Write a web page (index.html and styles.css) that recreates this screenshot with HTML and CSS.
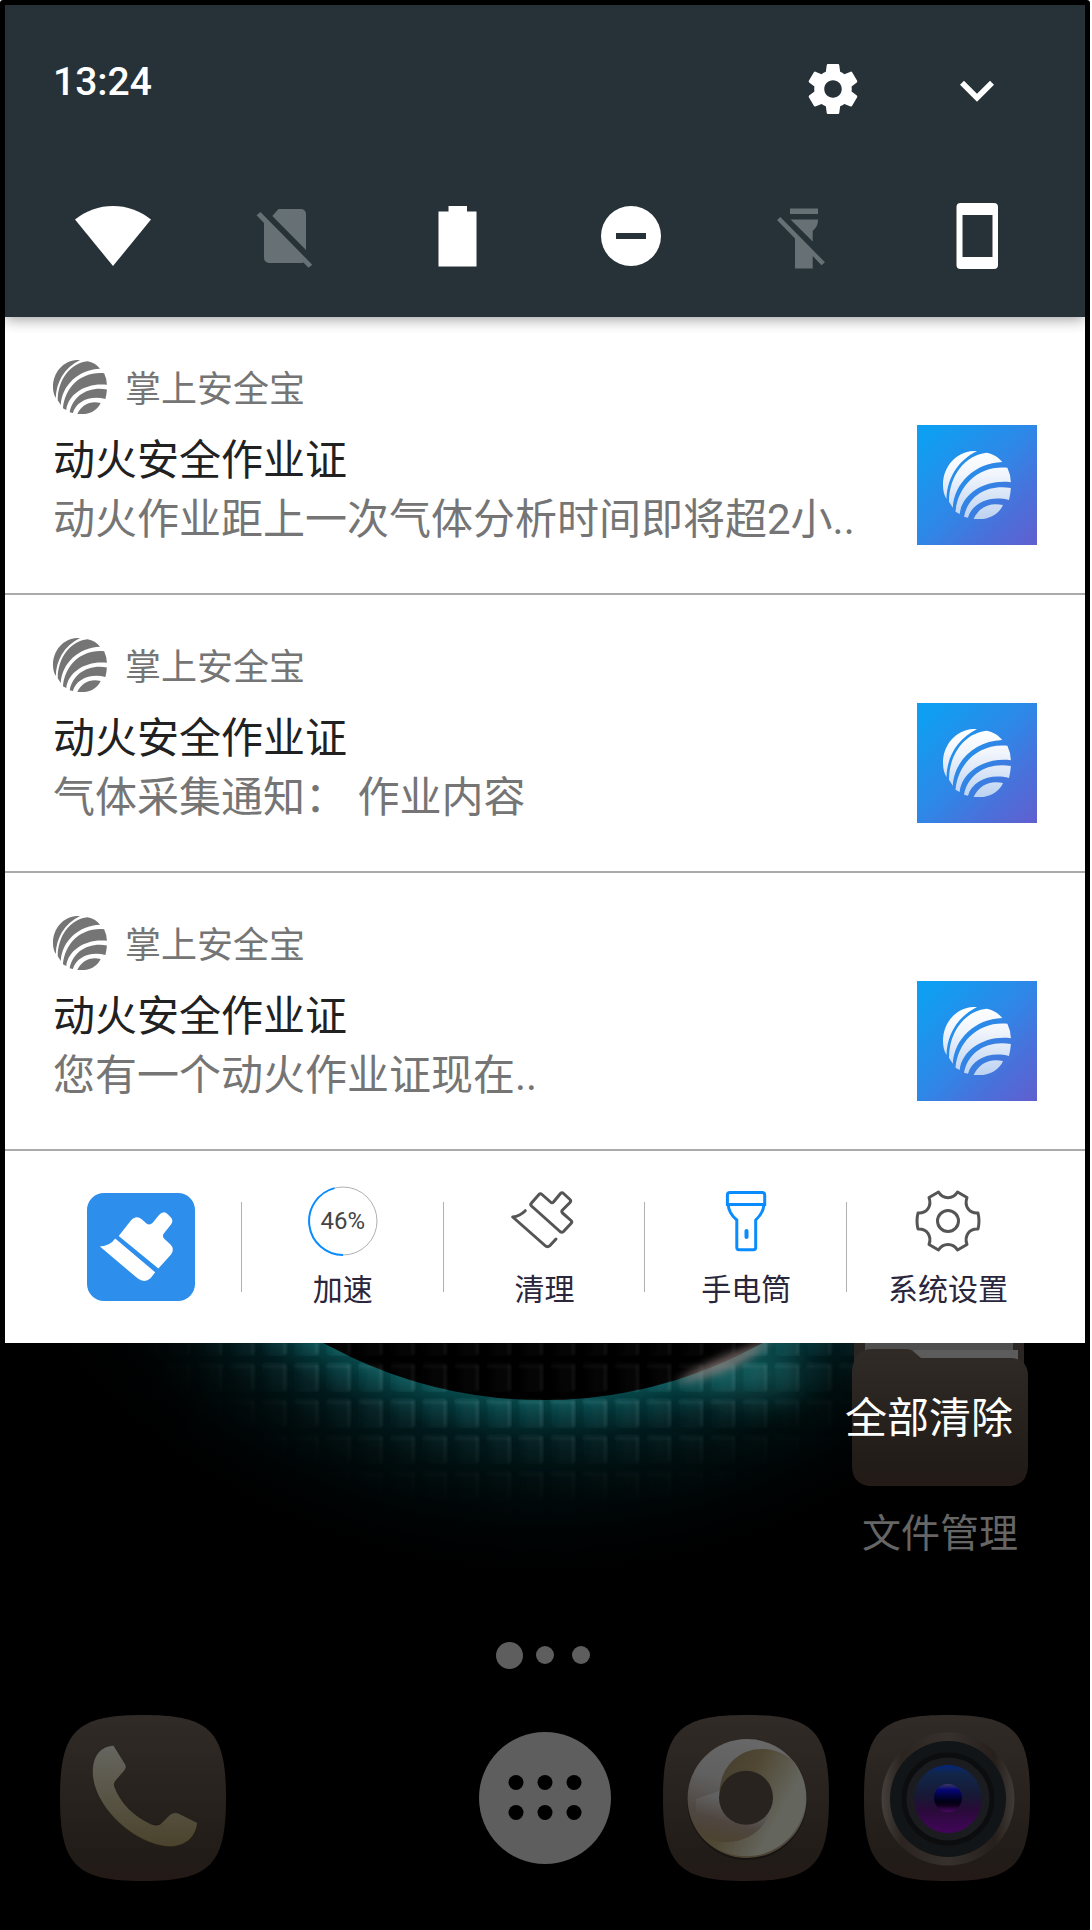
FILE: index.html
```html
<!DOCTYPE html>
<html lang="zh-CN">
<head>
<meta charset="utf-8">
<meta name="viewport" content="width=device-width, initial-scale=1">
<title>通知</title>
<link rel="stylesheet" href="styles.css">
</head>
<body>
<svg class="defs" aria-hidden="true">
  <defs>
    <linearGradient id="ball-shade" gradientUnits="userSpaceOnUse" x1="0" y1="0" x2="0" y2="68">
      <stop offset="0" stop-color="#fff"/><stop offset=".35" stop-color="#f1f5fc"/><stop offset="1" stop-color="#bcd2f1"/>
    </linearGradient>
    <linearGradient id="tile-brown" x1="0" y1="0" x2="0" y2="1">
      <stop offset="0" stop-color="#312b28"/><stop offset=".85" stop-color="#211c18"/><stop offset="1" stop-color="#241a17"/>
    </linearGradient>
    <symbol id="ball" viewBox="0 0 68 68">
      <path d="M34 0C14 -1 0 15 0 34C0 39 1 44 3.500 48C4 28 14 10 34 0Z"/>
      <path d="M43.500 1.700C50 3 55.500 6 59.200 11C32 12 11 32 9.800 56.700L6 50.700C6 25 22 4 43.500 1.700Z"/>
      <path d="M64.400 16.700Q67.500 23 67.900 31.300C43 28 19 42 16.700 63L12.500 60.700C15 34 36 14 64.400 16.700Z"/>
      <path d="M67.900 37Q67.500 43 66 49C47 44 29 52 25 66.700L21 65.700C25 45 44 33 67.900 37Z"/>
      <path d="M60 54C56 64 43 70 30.600 68C36 56 47 51 60 54Z"/>
    </symbol>
  </defs>
</svg>

<main class="screen">
  <div class="shade">
    <header class="quick">
      <div class="status">
        <time class="clock" datetime="13:24">13:24</time>
        <div class="status-actions">
          <button class="icon-button" type="button" aria-label="设置">
            <svg width="60" height="60" viewBox="0 0 24 24" fill="#fff"><path d="M19.430 12.980c.04-.32.07-.64.07-.98s-.03-.66-.07-.98l2.110-1.650c.19-.15.24-.42.12-.64l-2-3.460c-.12-.22-.39-.3-.61-.22l-2.490 1c-.52-.4-1.080-.73-1.690-.98l-.38-2.650C14.460 2.180 14.250 2 14 2h-4c-.25 0-.46.18-.49.42l-.38 2.650c-.61.25-1.170.59-1.690.98l-2.490-1c-.23-.09-.49 0-.61.22l-2 3.460c-.13.22-.07.49.12.64l2.110 1.650c-.04.32-.07.65-.07.98s.03.66.07.98l-2.110 1.650c-.19.15-.24.42-.12.64l2 3.460c.12.22.39.3.61.22l2.490-1c.52.4 1.080.73 1.690.98l.38 2.650c.03.24.24.42.49.42h4c.25 0 .46-.18.49-.42l.38-2.650c.61-.25 1.170-.59 1.690-.98l2.490 1c.23.09.49 0 .61-.22l2-3.460c.12-.22.07-.49-.12-.64l-2.110-1.650zM12 15.500c-1.930 0-3.500-1.570-3.500-3.500s1.570-3.500 3.500-3.500 3.500 1.570 3.500 3.500-1.570 3.500-3.500 3.500z"/></svg>
          </button>
          <button class="icon-button" type="button" aria-label="展开">
            <svg width="68" height="68" viewBox="0 0 24 24" fill="#fff"><path d="M16.590 9.090L12 13.670 7.410 9.090 6 10.500l6 6 6-6z"/></svg>
          </button>
        </div>
      </div>
      <div class="tiles">
        <button class="icon-button" type="button" aria-label="WLAN"><svg width="80" height="80" fill="#fff"><path d="M2 23.500A60 60 0 0 1 78 23.500L40 70Z"/></svg></button>
        <button class="icon-button" type="button" aria-label="无 SIM 卡"><svg width="80" height="80" fill="#677074"><path d="M26.300 20L32.500 13H55a5 5 0 0 1 5 5V54Z"/><path d="M10.600 19.300L14.400 16L66.300 68.700L62.500 71.700L57.500 66.500L56 67H23a5 5 0 0 1-5-5V27Z"/></svg></button>
        <button class="icon-button" type="button" aria-label="电池"><svg width="80" height="80" fill="#fff"><path d="M29.500 10H48V15.500H57.500V70.500H19.500V15.500H29.500Z"/></svg></button>
        <button class="icon-button" type="button" aria-label="勿扰"><svg width="80" height="80"><circle cx="40" cy="40" r="30" fill="#fff"/><path d="M25 37H55V43H25Z" fill="#263238"/></svg></button>
        <button class="icon-button" type="button" aria-label="手电筒已关闭"><svg width="80" height="80" fill="#677074"><path d="M26 12.500H54V18H26Z"/><path d="M26.500 23.500H54C54 29 52 32 48.700 35V45.500Z"/><path d="M13 24L16.300 21L61 66.300L57.500 69.300L48.700 60V72.500H31V42.500Z"/></svg></button>
        <button class="icon-button" type="button" aria-label="屏幕方向"><svg width="80" height="80" fill="#fff" fill-rule="evenodd"><path d="M23.500 7H57a4 4 0 0 1 4 4V69a4 4 0 0 1-4 4H23.500a4 4 0 0 1-4-4V11a4 4 0 0 1 4-4ZM25.500 19V61H55.500V19Z"/></svg></button>
      </div>
    </header>

    <section class="notices">
      <article class="notice">
        <div class="notice-text">
          <div class="app"><svg class="app-mark" width="54" height="54"><use href="#ball"/></svg><span>掌上安全宝</span></div>
          <h2>动火安全作业证</h2>
          <p>动火作业距上一次气体分析时间即将超2小..</p>
        </div>
        <div class="badge"><svg width="68" height="68"><use href="#ball"/></svg></div>
      </article>
      <article class="notice">
        <div class="notice-text">
          <div class="app"><svg class="app-mark" width="54" height="54"><use href="#ball"/></svg><span>掌上安全宝</span></div>
          <h2>动火安全作业证</h2>
          <p>气体采集通知： 作业内容</p>
        </div>
        <div class="badge"><svg width="68" height="68"><use href="#ball"/></svg></div>
      </article>
      <article class="notice">
        <div class="notice-text">
          <div class="app"><svg class="app-mark" width="54" height="54"><use href="#ball"/></svg><span>掌上安全宝</span></div>
          <h2>动火安全作业证</h2>
          <p>您有一个动火作业证现在..</p>
        </div>
        <div class="badge"><svg width="68" height="68"><use href="#ball"/></svg></div>
      </article>
    </section>

    <nav class="tools">
      <button class="tool tool-main" type="button" aria-label="清理大师">
        <svg width="108" height="108"><rect width="108" height="108" rx="17" fill="#2d8eec"/><g fill="#fff"><path d="M31.700 43L43.500 28Q49 21.500 55 26.500L59.500 30.500Q62.500 32.500 65.500 30L72 22Q76.500 17 81 21.500L83.500 24Q87 27.500 84 31.500L76.800 40.500Q75 43 77 45.500L83.500 51.500Q88 56 84 61.500L71.400 75.500Z"/><path d="M12.900 53.600Q23 53 28.200 45.500L68.200 79.300L63.500 85.300Q57.500 90.500 50.500 85.300Z"/></g></svg>
      </button>
      <button class="tool" type="button">
        <span class="gauge"><svg width="70" height="70" fill="none"><circle cx="35" cy="35" r="34" stroke="#b0b0b0"/><path d="M35 69A34 34 0 0 1 26.500 2.100" stroke="#0a8cff" stroke-width="2"/></svg><span class="gauge-value">46%</span></span>
        <span>加速</span>
      </button>
      <button class="tool" type="button">
        <svg width="70" height="70" fill="none" stroke="#555" stroke-width="3" stroke-linejoin="round" stroke-linecap="round"><path d="M22.500 17L30 8.500Q31.300 7 33 8.500L41.500 16Q43 17.500 44.500 16L51.500 7.500Q53 5.800 54.500 7.500L61 13.500Q62.500 15 61 16.500L53.500 24Q52 25.700 53.500 27L62 34.500Q63.500 36 62 37.500L54.500 45.500Q52.800 47 51 45.500L22.500 20Q21 18.500 22.500 17Z"/><path d="M16.300 24.700Q11 30 3.700 31L36 59.500Q38.500 62 41 59.500L47 53"/></svg>
        <span>清理</span>
      </button>
      <button class="tool" type="button">
        <svg width="70" height="70" fill="none" stroke="#0a8cff" stroke-width="3"><path d="M19 6.500H51Q53.700 6.500 53.700 9V18.500H16.400V9Q16.400 6.500 19 6.500Z"/><path d="M17.200 18.500C17.500 26 21 30 25.800 34V61.500Q25.800 63.700 28 63.700H42.500Q44.700 63.700 44.700 61.500V34C49 30 52.500 26 53 18.500"/><path d="M35.500 45V51" stroke-width="4" stroke-linecap="round"/></svg>
        <span>手电筒</span>
      </button>
      <button class="tool" type="button">
        <svg width="70" height="70" fill="none" stroke="#555" stroke-width="3" stroke-linejoin="round"><circle cx="35" cy="35" r="10.500"/><path d="M25.500 6C30 13.500 40 13.500 44.500 6L54 11.500C51 20 56 27.500 65 27Q67 35 65 43C56 42.500 51 50 54 58.500L44.500 64C40 56.500 30 56.500 25.500 64L16 58.500C19 50 14 42.500 5 43Q3 35 5 27C14 27.500 19 20 16 11.500Z"/></svg>
        <span>系统设置</span>
      </button>
    </nav>
  </div>

  <section class="home">
    <svg class="wallpaper" viewBox="0 0 1090 586" preserveAspectRatio="xMidYMin slice" aria-hidden="true">
      <defs>
        <radialGradient id="glow" gradientUnits="userSpaceOnUse" cx="543" cy="-393" r="620">
          <stop offset=".725" stop-color="#085356"/><stop offset=".75" stop-color="#043b3e"/><stop offset=".79" stop-color="#021d20"/><stop offset=".85" stop-color="#000e0f"/><stop offset=".93" stop-color="#000405"/><stop offset="1" stop-color="#000"/>
        </radialGradient>
        <radialGradient id="grid-fade" gradientUnits="userSpaceOnUse" cx="543" cy="-393" r="620">
          <stop offset=".725" stop-color="#fff"/><stop offset=".79" stop-color="#aaa"/><stop offset=".86" stop-color="#333"/><stop offset=".92" stop-color="#000"/>
        </radialGradient>
        <linearGradient id="side-fade" x1="0" x2="1"><stop offset=".04" stop-color="#000"/><stop offset=".2" stop-color="#000" stop-opacity="0"/></linearGradient>
        <linearGradient id="cell" x1="0" y1="0" x2="1" y2="0"><stop offset="0" stop-color="#fff" stop-opacity="0"/><stop offset=".5" stop-color="#fff" stop-opacity=".04"/></linearGradient>
        <pattern id="grid" width="32" height="36" x="-2" y="20" patternUnits="userSpaceOnUse">
          <path d="M0 0H9V36H0ZM9 28H32V36H9Z" fill="#000" fill-opacity=".14"/>
          <rect x="9" y="3" width="23" height="25" fill="url(#cell)"/>
          <path d="M10 3H32" stroke="#fff" stroke-opacity=".08" stroke-width="3"/>
          <path d="M31 2V27" stroke="#fff" stroke-opacity=".1" stroke-width="2"/>
        </pattern>
        <mask id="grid-mask" maskUnits="userSpaceOnUse" x="0" y="0" width="1090" height="586"><rect width="1090" height="586" fill="url(#grid-fade)"/></mask>
        <filter id="grain" x="0" y="0" width="100%" height="100%"><feGaussianBlur stdDeviation="1"/></filter>
        <filter id="soft" x="-50%" y="-200%" width="200%" height="500%"><feGaussianBlur stdDeviation="4"/></filter>
        <filter id="softer" x="-50%" y="-100%" width="200%" height="300%"><feGaussianBlur stdDeviation="16"/></filter>
      </defs>
      <rect width="1090" height="586" fill="url(#glow)"/>
      <ellipse cx="745" cy="30" rx="60" ry="26" fill="#1a7a7a" opacity=".5" filter="url(#softer)"/>
      <circle cx="543" cy="-393" r="450" fill="#000"/>
      <g mask="url(#grid-mask)"><rect width="1090" height="180" fill="url(#grid)" filter="url(#grain)"/></g>
      <circle cx="543" cy="-393" r="449" fill="#000" fill-opacity=".45"/>
      <path d="M674 40C700 22 735 8 772 -4C752 18 715 36 674 40Z" fill="#8a7a78" opacity=".8" filter="url(#soft)"/>
      <rect width="1090" height="586" fill="url(#side-fade)"/>
    </svg>

    <button class="clear" type="button">全部清除</button>

    <a class="launcher" href="#files">
      <svg width="176" height="143" aria-hidden="true">
        <path d="M2 0H172V60H2Z" fill="#2b2523"/><path d="M13 0H161V7H166V30H13Z" fill="#4e4e4e"/><path d="M62 7H166V20H62Z" fill="#5c5c5c"/>
        <path d="M0 28Q2 6 20 6H55Q59 6 62 9L69 15H160Q176 17 176 33V124Q175 141 159 143H17Q1 141 0 124Z" fill="url(#tile-brown)"/>
      </svg>
      <span>文件管理</span>
    </a>

    <ol class="pages" aria-label="页面"><li class="current"></li><li></li><li></li></ol>

    <nav class="dock">
      <a href="#phone" aria-label="电话">
        <svg width="166" height="166">
          <defs><linearGradient id="handset" x1="0" y1="0" x2="0" y2="1"><stop offset="0" stop-color="#66665f"/><stop offset="1" stop-color="#4b432c"/></linearGradient></defs>
          <path d="M83 0C150 0 166 16 166 83S150 166 83 166S0 150 0 83S16 0 83 0Z" fill="url(#tile-brown)"/>
          <path d="M53.600 30.300L65.500 49.500Q67 52.500 65 55L55.500 66Q53.500 68.500 54.500 71.500C61 89 74 101 91 109Q96.500 111.500 100.500 109L110 99.500Q114 96.500 118 98L137.500 107.700C136 123 124 132 109 131.700C74 130 31 90 32.400 55C33 40 41 31 53.600 30.300Z" fill="url(#handset)" stroke="#16110e" stroke-opacity=".45" stroke-width="1"/>
        </svg>
      </a>
      <a class="apps" href="#apps" aria-label="应用">
        <svg width="132" height="132"><circle cx="66" cy="66" r="66" fill="#5e5e5e"/><g fill="#000"><circle cx="37" cy="50.500" r="7.500"/><circle cx="66" cy="50.500" r="7.500"/><circle cx="95" cy="50.500" r="7.500"/><circle cx="37" cy="80.500" r="7.500"/><circle cx="66" cy="80.500" r="7.500"/><circle cx="95" cy="80.500" r="7.500"/></g></svg>
      </a>
      <a href="#browser" aria-label="浏览器">
        <svg width="166" height="166">
          <defs>
            <linearGradient id="ring-a" x1=".6" y1="0" x2=".3" y2="1"><stop offset="0" stop-color="#686868"/><stop offset=".4" stop-color="#606060"/><stop offset=".7" stop-color="#4f4640"/><stop offset="1" stop-color="#4c4330"/></linearGradient>
            <linearGradient id="ring-b" gradientUnits="userSpaceOnUse" x1="60" y1="50" x2="125" y2="85"><stop offset="0" stop-color="#484030"/><stop offset=".4" stop-color="#504834"/><stop offset="1" stop-color="#64655d"/></linearGradient>
          </defs>
          <path d="M83 0C150 0 166 16 166 83S150 166 83 166S0 150 0 83S16 0 83 0Z" fill="url(#tile-brown)"/>
          <circle cx="84" cy="85" r="60" fill="#000" opacity=".3"/>
          <circle cx="84" cy="83.500" r="59.500" fill="url(#ring-a)"/>
          <path d="M56.500 76C58 50 78 33 100 34C112 34 125 40 132 48A59.500 59.500 0 1 1 33 114C42 124 54 127 64 127C86 126 102 114 108 94L84 60Z" fill="url(#ring-b)"/>
          <path d="M33 114C42 124 54 127 64 127C86 126 102 114 108 94L84 60L56.500 76L33 84Z" fill="url(#ring-a)"/>
          <circle cx="83" cy="82.700" r="27" fill="#28231f"/>
        </svg>
      </a>
      <a href="#camera" aria-label="相机">
        <svg width="166" height="166">
          <defs>
            <linearGradient id="lens" x1="0" y1="0" x2="0" y2="1"><stop offset="0" stop-color="#03257c"/><stop offset=".12" stop-color="#11264a"/><stop offset=".45" stop-color="#171934"/><stop offset=".65" stop-color="#280b38"/><stop offset="1" stop-color="#43055a"/></linearGradient>
            <linearGradient id="core" x1="0" y1="0" x2="0" y2="1"><stop offset="0" stop-color="#3c3a60"/><stop offset=".2" stop-color="#060678"/><stop offset=".6" stop-color="#000018"/><stop offset=".75" stop-color="#0c0018"/><stop offset="1" stop-color="#4c0868"/></linearGradient>
            <linearGradient id="metal" x1="0" y1="0" x2="1" y2="0"><stop offset="0" stop-color="#45403d"/><stop offset=".15" stop-color="#2b2420"/><stop offset=".5" stop-color="#37312d"/><stop offset=".85" stop-color="#261f1b"/><stop offset="1" stop-color="#413b38"/></linearGradient>
          </defs>
          <path d="M83 0C150 0 166 16 166 83S150 166 83 166S0 150 0 83S16 0 83 0Z" fill="url(#tile-brown)"/>
          <circle cx="84" cy="84" r="66.500" fill="url(#metal)"/>
          <circle cx="84" cy="84" r="58" fill="#121517"/>
          <circle cx="84" cy="84" r="44" fill="#1a1c1f" stroke="#0c0d0e" stroke-width="5"/>
          <circle cx="84" cy="84" r="34" fill="url(#lens)"/>
          <circle cx="84" cy="83" r="14" fill="url(#core)"/>
        </svg>
      </a>
    </nav>
  </section>
</main>
</body>
</html>
```
FILE: styles.css
```css
* { box-sizing: border-box; }

body {
  margin: 0 2px 0 0;
  background: #fff;
  font-family: Roboto, "Noto Sans CJK SC", sans-serif;
}

svg { display: block; flex: none; }

.defs { position: absolute; width: 0; height: 0; }

button {
  padding: 0;
  border: 0;
  background: none;
  color: inherit;
  font: inherit;
}

a { color: inherit; text-decoration: none; }

.screen {
  padding-top: 5px;
  border-radius: 3px 3px 0 0;
  background: #000;
}

.shade { margin: 0 5px; background: #fff; }

/* quick settings */
.quick {
  position: relative;
  padding: 48px 0 21px;
  background: #263238;
  box-shadow: 0 2px 14px rgba(0, 0, 0, .4);
  clip-path: inset(0 0 -16px 0);
}

.status {
  display: flex;
  justify-content: space-between;
  align-items: flex-start;
  height: 98px;
  padding: 0 74px 0 48px;
}

.clock {
  padding-top: 4px;
  color: #fff;
  font-size: 39px;
  font-weight: 500;
  line-height: 50px;
}

.status-actions { display: flex; align-items: center; gap: 80px; margin-top: 2px; }

.icon-button { display: grid; place-items: center; }

.tiles {
  display: grid;
  grid-template-columns: repeat(6, 1fr);
  margin-top: 25px;
  padding: 0 22px;
  height: 120px;
  align-items: center;
}

/* notifications */
.notice {
  display: flex;
  justify-content: space-between;
  gap: 24px;
  padding: 43px 48px 48px;
  border-bottom: 2px solid #aaa;
}

.notice-text { min-width: 0; margin-bottom: -4px; }

.app {
  display: flex;
  align-items: center;
  gap: 18px;
  height: 54px;
  color: #757575;
  font-size: 36px;
}

.app span { padding-bottom: 2px; }

.app-mark { fill: #757575; }

.notice h2,
.notice p {
  margin: 0;
  font-size: 42px;
  font-weight: 400;
  line-height: 58px;
}

.notice h2 { margin: 18px 0 1px; color: #212121; }
.notice p { color: #757575; }

.badge {
  display: grid;
  place-items: center;
  flex: none;
  align-self: flex-end;
  width: 120px;
  height: 120px;
  background: linear-gradient(135deg, #0f9ff2 8%, #2f87e7 50%, #4a70da 75%, #605fce);
  fill: url(#ball-shade);
}

/* shortcut bar */
.tools {
  display: grid;
  grid-template-columns: repeat(5, 1fr);
  align-items: center;
  height: 192px;
  padding: 0 36px 0 35px;
}

.tool {
  position: relative;
  display: flex;
  flex-direction: column;
  align-items: center;
  gap: 16px;
  color: #2a263c;
  font-size: 30px;
  line-height: 36px;
}

.tool:not(:last-child)::after {
  content: "";
  position: absolute;
  top: calc(50% - 45px);
  right: 0;
  width: 1px;
  height: 90px;
  background: #b0b0b0;
}

.gauge { display: grid; place-items: center; }
.gauge > * { grid-area: 1 / 1; }
.gauge-value { color: #444; font-size: 24px; }

/* home screen */
.home {
  position: relative;
  display: flex;
  flex-direction: column;
  overflow: hidden;
  padding-bottom: 49px;
  color: #666;
}

.wallpaper { position: absolute; inset: 0; width: 100%; height: 100%; }

.clear {
  position: absolute;
  z-index: 1;
  top: 46px;
  right: 77px;
  color: #fff;
  font-size: 42px;
  line-height: 60px;
}

.launcher {
  position: relative;
  display: flex;
  flex-direction: column;
  align-items: center;
  align-self: flex-end;
  gap: 24px;
  margin-right: 62px;
  font-size: 39px;
  line-height: 48px;
}

.pages {
  position: relative;
  display: flex;
  justify-content: center;
  margin: 83px 0 0;
  padding: 0;
  list-style: none;
}

.pages li { display: grid; place-items: center; width: 36px; height: 28px; }

.pages li::before {
  content: "";
  width: 18px;
  height: 18px;
  border-radius: 50%;
  background: #5e5e5e;
}

.pages .current::before { width: 27px; height: 27px; }

.dock {
  position: relative;
  display: grid;
  grid-template-columns: repeat(5, 1fr);
  place-items: center;
  margin-top: 46px;
  padding: 0 42px;
}

.dock .apps { grid-column: 3; }
```
